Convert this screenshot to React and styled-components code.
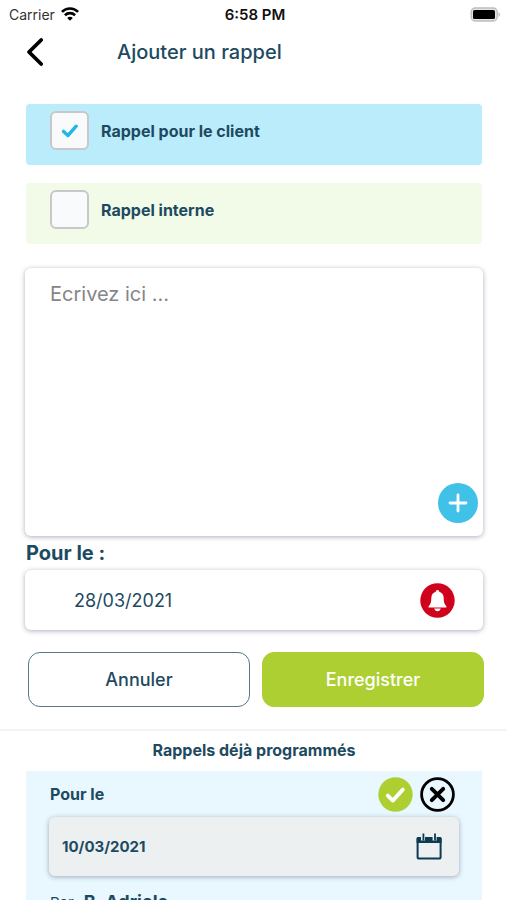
import React, { useState } from 'react'
import styled, { createGlobalStyle } from 'styled-components'

const colors = {
  navy: '#1d4a61',
  sky: '#bbecfb',
  mint: '#f1fbe7',
  cyan: '#3fc1e8',
  green: '#adcf32',
  red: '#d0021b',
  pale: '#e8f8fe',
  grey: '#ecf0f1',
}

const GlobalStyle = createGlobalStyle`
  * {
    box-sizing: border-box;
  }
  body {
    margin: 0;
    background: #fff;
    font-family: Inter, "Liberation Sans", sans-serif;
    color: ${colors.navy};
  }
  button, input, textarea {
    font-family: inherit;
    color: inherit;
  }
`

const Screen = styled.div`
  height: 100vh;
  display: flex;
  flex-direction: column;
  overflow: hidden;
`

const StatusBar = styled.div`
  display: grid;
  grid-template-columns: 1fr auto 1fr;
  align-items: center;
  height: 28px;
  padding: 0 6px 0 9px;
  color: #111;
  font-size: 14px;
  flex-shrink: 0;
`

const Carrier = styled.div`
  display: flex;
  align-items: center;
  gap: 6px;
  color: #333;
`

const Clock = styled.div`
  font-size: 15px;
  font-weight: 600;
`

const Battery = styled.div`
  display: flex;
  justify-content: flex-end;
`

const Header = styled.header`
  display: flex;
  align-items: center;
  height: 48px;
  padding: 0 24px;
  gap: 69px;
  flex-shrink: 0;
`

const IconButton = styled.button`
  display: flex;
  padding: 0;
  border: none;
  background: none;
  cursor: pointer;
`

const PageTitle = styled.h1`
  margin: 0;
  font-size: 20px;
  font-weight: 500;
`

const Form = styled.form`
  display: flex;
  flex-direction: column;
  padding: 28px 24px 22px 25px;
  border-bottom: 2px solid #f3f3f4;
  flex-shrink: 0;
`

const CheckRow = styled.label`
  display: flex;
  align-items: flex-start;
  gap: 12px;
  height: 61px;
  margin: 0 1px 18px;
  padding: 7px 24px;
  border-radius: 4px;
  background: ${({ $bg }) => $bg};
  font-size: 16px;
  font-weight: 700;
  line-height: 40px;
  cursor: pointer;
`

const CheckBox = styled.span`
  display: grid;
  width: 39px;
  height: 39px;
  > * {
    grid-area: 1 / 1;
    place-self: center;
  }
  svg {
    pointer-events: none;
    visibility: hidden;
  }
  input:checked + svg {
    visibility: visible;
  }
`

const CheckInput = styled.input`
  appearance: none;
  width: 39px;
  height: 39px;
  margin: 0;
  border: 2px solid #c8c8ca;
  border-radius: 6px;
  background: #f9fafb;
  cursor: pointer;
`

const Panel = styled.div`
  display: flex;
  border-radius: 6px;
  background: ${({ $bg }) => $bg || '#fff'};
  box-shadow: 0 1px 5px rgba(50, 50, 93, 0.4);
`

const NotePanel = styled(Panel)`
  align-items: flex-end;
  height: 268px;
  margin-top: 6px;
  padding: 14px 5px 13px 25px;
`

const NoteInput = styled.textarea`
  flex: 1;
  min-width: 0;
  align-self: stretch;
  padding: 0;
  border: none;
  outline: none;
  resize: none;
  background: transparent;
  font-size: 20px;
  line-height: 24px;
  &::placeholder {
    color: #868686;
    opacity: 1;
  }
`

const FieldLabel = styled.label`
  padding: 3px 1px;
  font-size: 20px;
  font-weight: 700;
  line-height: 28px;
`

const DatePanel = styled(Panel)`
  align-items: center;
  height: 60px;
  padding: 0 28px 0 49px;
`

const DateInput = styled.input`
  flex: 1;
  min-width: 0;
  padding: 0;
  border: none;
  outline: none;
  background: transparent;
  font-size: ${({ $small }) => ($small ? '15px' : '18px')};
  font-weight: ${({ $small }) => ($small ? 700 : 400)};
`

const Actions = styled.div`
  display: grid;
  grid-template-columns: 1fr 1fr;
  gap: 12px;
  margin: 22px -1px 0 3px;
`

const ActionButton = styled.button`
  height: 55px;
  border: 1px solid ${({ $primary }) => ($primary ? colors.green : '#54788b')};
  border-radius: 12px;
  background: ${({ $primary }) => ($primary ? colors.green : '#fff')};
  color: ${({ $primary }) => ($primary ? '#fff' : colors.navy)};
  font-size: 18px;
  font-weight: 500;
  cursor: pointer;
`

const Scheduled = styled.section`
  flex: 1;
  min-height: 0;
  padding: 7px 25px 0 26px;
  overflow-y: auto;
  scrollbar-width: none;
`

const SectionTitle = styled.h2`
  margin: 0 0 9px;
  font-size: 16px;
  font-weight: 700;
  line-height: 24px;
  text-align: center;
`

const Card = styled.article`
  padding: 5px 23px 24px;
  background: ${colors.pale};
`

const CardHead = styled.div`
  display: flex;
  align-items: center;
  gap: 7px;
  height: 36px;
  padding: 0 4px 0 1px;
  margin-bottom: 5px;
`

const CardLabel = styled.label`
  flex: 1;
  font-size: 16px;
  font-weight: 700;
`

const CardDate = styled(Panel)`
  align-items: center;
  height: 59px;
  padding: 0 16px 0 13px;
`

const Author = styled.p`
  display: flex;
  align-items: baseline;
  gap: 10px;
  margin: 14px 1px 0;
  font-size: 15px;
  line-height: 24px;
  strong {
    font-size: 18px;
    font-weight: 700;
  }
`

const WifiIcon = () => (
  <svg width="18" height="14" viewBox="0 0 18 14" fill="none" stroke="#000" strokeWidth="2.6">
    <path d="M0.9 4.9C5.4 0.3 12.6 0.3 17.1 4.9" />
    <path d="M3.9 8.2C6.8 5.4 11.2 5.4 14.1 8.2" />
    <path d="M9 13.8L6.2 10.9C7.8 9.4 10.2 9.4 11.8 10.9Z" fill="#000" stroke="none" />
  </svg>
)

const BatteryIcon = () => (
  <svg width="31" height="15" viewBox="0 0 31 15">
    <rect x="1.2" y="1" width="26" height="13" rx="4" fill="#e4e4e4" stroke="#bdbdbd" strokeWidth="1.4" />
    <rect x="3" y="3" width="22" height="9" rx="1.6" fill="#000" />
    <path d="M28.5 5.2C30.5 6 30.5 9 28.5 9.8Z" fill="#bdbdbd" />
  </svg>
)

const BackIcon = () => (
  <svg width="24" height="30" viewBox="0 0 24 30" fill="none" stroke="#000" strokeWidth="3.8" strokeLinecap="round" strokeLinejoin="round">
    <path d="M17.2 3L5 15L17.2 27" />
  </svg>
)

const TickIcon = () => (
  <svg width="18" height="14" viewBox="0 0 18 14" fill="none" stroke="#22b8e6" strokeWidth="3.4" strokeLinecap="round" strokeLinejoin="round">
    <path d="M2.6 7.4L6.9 11.5L15.2 2.2" />
  </svg>
)

const PlusIcon = () => (
  <svg width="40" height="40" viewBox="0 0 40 40">
    <circle cx="20" cy="20" r="20" fill={colors.cyan} />
    <path d="M20 12V28M12 20H28" stroke="#fff" strokeWidth="2.8" strokeLinecap="round" />
  </svg>
)

const BellIcon = () => (
  <svg width="35" height="35" viewBox="0 0 35 35">
    <circle cx="17.5" cy="17.5" r="17.2" fill={colors.red} />
    <path
      d="M17.5 7C16.4 7 15.8 7.7 15.8 8.8C12.8 9.6 11.3 12 11.3 15.2C11.3 19.4 10.5 21.3 8.6 23.2V24.4H26.4V23.2C24.5 21.3 23.7 19.4 23.7 15.2C23.7 12 22.2 9.6 19.2 8.8C19.2 7.7 18.6 7 17.5 7Z"
      fill="#fff"
    />
    <path d="M14.2 25.6H20.8C20.3 27.3 19.1 28.2 17.5 28.2C15.9 28.2 14.7 27.3 14.2 25.6Z" fill="#fff" />
  </svg>
)

const ConfirmIcon = () => (
  <svg width="35" height="35" viewBox="0 0 35 35" fill="none" strokeLinecap="round" strokeLinejoin="round">
    <circle cx="17.5" cy="17.5" r="17.2" fill={colors.green} />
    <path d="M9.8 18.6L14.8 23.6L24.8 12.6" stroke="#fff" strokeWidth="3.8" />
  </svg>
)

const RemoveIcon = () => (
  <svg width="35" height="35" viewBox="0 0 35 35" fill="none" stroke="#000" strokeLinecap="round">
    <circle cx="17.5" cy="17.5" r="15.9" strokeWidth="2.8" />
    <path d="M11.8 11.8L23.2 23.2M23.2 11.8L11.8 23.2" strokeWidth="3.9" />
  </svg>
)

const CalendarIcon = () => (
  <svg width="27" height="27" viewBox="0 0 27 27">
    <rect x="1.6" y="5" width="23" height="20.6" rx="1.6" fill="none" stroke="#0d3b52" strokeWidth="2" />
    <path d="M0.6 5.4Q0.6 4 2 4H24.2Q25.6 4 25.6 5.4V10H0.6Z" fill="#0d3b52" />
    <path d="M7 0V7.6M18.6 0V7.6" stroke={colors.grey} strokeWidth="4" />
    <path d="M7.4 0.6V7.4M19 0.6V7.4" stroke="#0d3b52" strokeWidth="1.8" />
  </svg>
)

const reminders = [{ id: 1, date: '10/03/2021', author: 'B. Adriele' }]

const ReminderCheck = ({ label, bg, checked, onChange }) => (
  <CheckRow $bg={bg}>
    <CheckBox>
      <CheckInput type="checkbox" checked={checked} onChange={(e) => onChange(e.target.checked)} />
      <TickIcon />
    </CheckBox>
    {label}
  </CheckRow>
)

const App = () => {
  const [forClient, setForClient] = useState(true)
  const [internal, setInternal] = useState(false)
  const [note, setNote] = useState('')
  const [date, setDate] = useState('28/03/2021')

  return (
    <Screen>
      <GlobalStyle />
      <StatusBar>
        <Carrier>
          Carrier
          <WifiIcon />
        </Carrier>
        <Clock>6:58 PM</Clock>
        <Battery>
          <BatteryIcon />
        </Battery>
      </StatusBar>
      <Header>
        <IconButton type="button" aria-label="Retour">
          <BackIcon />
        </IconButton>
        <PageTitle>Ajouter un rappel</PageTitle>
      </Header>
      <Form onSubmit={(e) => e.preventDefault()}>
        <ReminderCheck label="Rappel pour le client" bg={colors.sky} checked={forClient} onChange={setForClient} />
        <ReminderCheck label="Rappel interne" bg={colors.mint} checked={internal} onChange={setInternal} />
        <NotePanel>
          <NoteInput
            aria-label="Rappel"
            placeholder="Ecrivez ici ..."
            value={note}
            onChange={(e) => setNote(e.target.value)}
          />
          <IconButton type="button" aria-label="Ajouter">
            <PlusIcon />
          </IconButton>
        </NotePanel>
        <FieldLabel htmlFor="date">Pour le :</FieldLabel>
        <DatePanel>
          <DateInput id="date" value={date} onChange={(e) => setDate(e.target.value)} />
          <IconButton type="button" aria-label="Notification">
            <BellIcon />
          </IconButton>
        </DatePanel>
        <Actions>
          <ActionButton type="button">Annuler</ActionButton>
          <ActionButton type="submit" $primary>Enregistrer</ActionButton>
        </Actions>
      </Form>
      <Scheduled>
        <SectionTitle>Rappels déjà programmés</SectionTitle>
        {reminders.map((item) => (
          <Card key={item.id}>
            <CardHead>
              <CardLabel htmlFor={`reminder-${item.id}`}>Pour le</CardLabel>
              <IconButton type="button" aria-label="Valider">
                <ConfirmIcon />
              </IconButton>
              <IconButton type="button" aria-label="Supprimer">
                <RemoveIcon />
              </IconButton>
            </CardHead>
            <CardDate $bg={colors.grey}>
              <DateInput id={`reminder-${item.id}`} $small readOnly value={item.date} />
              <CalendarIcon />
            </CardDate>
            <Author>
              Par <strong>{item.author}</strong>
            </Author>
          </Card>
        ))}
      </Scheduled>
    </Screen>
  )
}

export default App
